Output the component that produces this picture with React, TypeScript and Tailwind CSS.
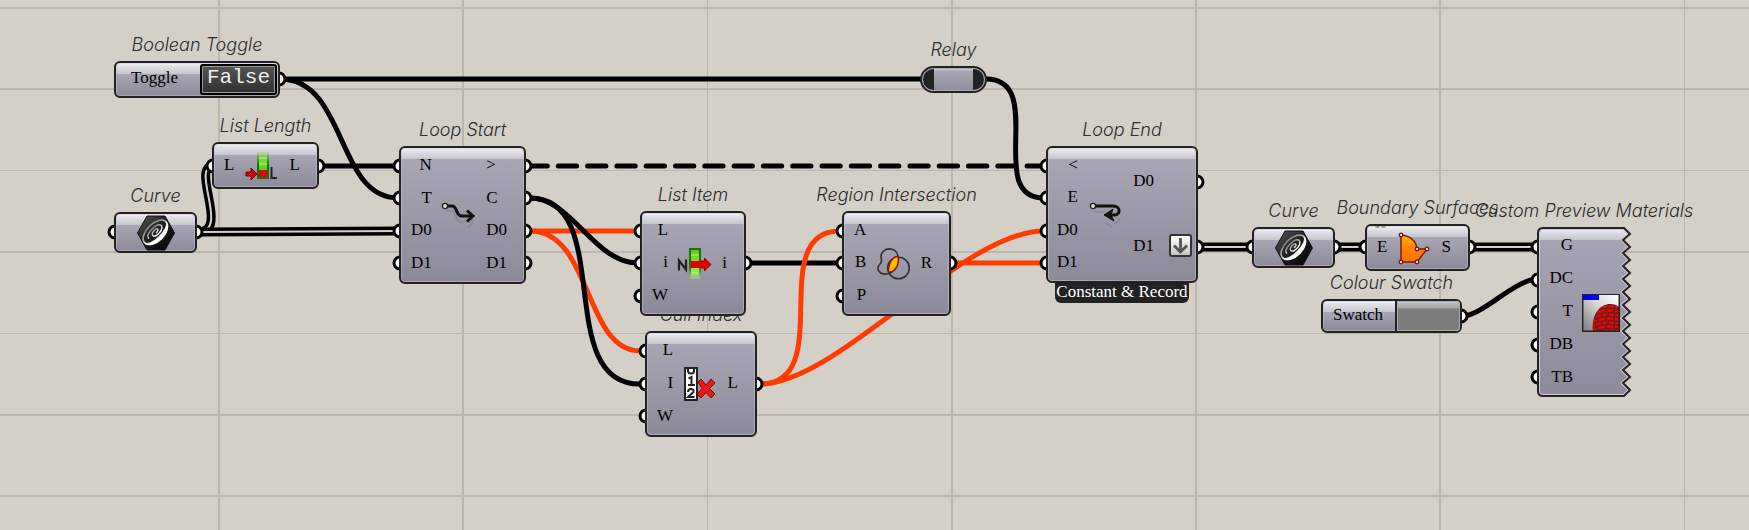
import type { ReactNode } from "react";

type WireKind = "solid" | "hot" | "double" | "dash";

const wires: { d: string; kind: WireKind }[] = [
  { d: "M280 79H924", kind: "solid" },
  { d: "M280 79C347 79 336 198 398 198", kind: "solid" },
  { d: "M198 232C231 232 189 166 214 166", kind: "double" },
  { d: "M198 232L398 231", kind: "double" },
  { d: "M320 166H398", kind: "solid" },
  { d: "M529 166H1044", kind: "dash" },
  { d: "M526 231H638", kind: "hot" },
  { d: "M530 231C592 231 584 351 640 351", kind: "hot" },
  { d: "M530 198C572 198 594 263 638 263", kind: "solid" },
  { d: "M530 198C616 198 552 384 640 384", kind: "solid" },
  { d: "M748 263H840", kind: "solid" },
  { d: "M760 384C838 384 764 231 840 231", kind: "hot" },
  { d: "M760 384C838 384 962 231 1044 231", kind: "hot" },
  { d: "M953 263H1044", kind: "hot" },
  { d: "M986 79C1048 79 984 198 1044 198", kind: "solid" },
  { d: "M1199 247H1250", kind: "double" },
  { d: "M1336 247H1364", kind: "double" },
  { d: "M1471 247H1537", kind: "double" },
  { d: "M1464 316C1482 315 1514 281 1536 279", kind: "solid" },
];

const ports: { x: number; ys: number[] }[] = [
  { x: 279, ys: [79] },
  { x: 213, ys: [166] },
  { x: 318, ys: [166] },
  { x: 115, ys: [232] },
  { x: 196, ys: [232] },
  { x: 400, ys: [166, 198, 231, 263] },
  { x: 525, ys: [166, 198, 231, 263] },
  { x: 641, ys: [231, 263, 296] },
  { x: 745, ys: [263] },
  { x: 646, ys: [351, 384, 416] },
  { x: 756, ys: [384] },
  { x: 843, ys: [231, 263, 296] },
  { x: 950, ys: [263] },
  { x: 1047, ys: [166, 198, 231, 263] },
  { x: 1197, ys: [182, 247] },
  { x: 1253, ys: [247] },
  { x: 1334, ys: [247] },
  { x: 1366, ys: [247] },
  { x: 1469, ys: [247] },
  { x: 1461, ys: [316] },
  { x: 1538, ys: [247, 280, 312, 345, 377] },
];

const gridColumns = [
  { at: 218, size: 2 }, { at: 462, size: 2 }, { at: 707, size: 1 }, { at: 951, size: 2 },
  { at: 1195, size: 2 }, { at: 1439, size: 2 }, { at: 1684, size: 1 },
];
const gridRows = [
  { at: 7, size: 2 }, { at: 88, size: 2 }, { at: 170, size: 1 }, { at: 251, size: 2 },
  { at: 333, size: 1 }, { at: 414, size: 2 }, { at: 495, size: 2 },
];

function Wire({ d, kind }: { d: string; kind: WireKind }) {
  if (kind === "double")
    return (
      <>
        <path d={d} stroke="#000" strokeWidth="9" />
        <path d={d} stroke="#d4d0c8" strokeWidth="2" />
      </>
    );
  if (kind === "dash")
    return <path d={d} stroke="#000" strokeWidth="5" strokeDasharray="18.3 11" strokeLinecap="round" />;
  return <path d={d} stroke={kind === "hot" ? "#ff3c00" : "#000"} strokeWidth="5" />;
}

function Wiring() {
  return (
    <svg className="absolute inset-0 h-full w-full" fill="none" aria-hidden="true">
      {gridColumns.map((g) => <rect key={g.at} x={g.at} y="0" width={g.size} height="100%" fill="#bab7af" />)}
      {gridRows.map((g) => <rect key={g.at} x="0" y={g.at} width="100%" height={g.size} fill="#bab7af" />)}
      {wires.map((w) => <Wire key={w.d} {...w} />)}
      {ports.map((p) => p.ys.map((y) => (
        <circle key={`${p.x}-${y}`} cx={p.x} cy={y} r="6" fill="#fff" stroke="#000" strokeWidth="3" />
      )))}
    </svg>
  );
}

function CurveIcon() {
  return (
    <svg width="40" height="36" viewBox="0 0 40 36" aria-hidden="true">
      <defs>
        <linearGradient id="hex" x1="0" y1="0" x2="1" y2="1">
          <stop offset="0" stopColor="#5a5a5a" /><stop offset=".45" stopColor="#222" /><stop offset="1" stopColor="#000" />
        </linearGradient>
        <linearGradient id="ring" x1="0" y1="0" x2="0" y2="1">
          <stop offset="0" stopColor="#8a8a8a" /><stop offset=".6" stopColor="#ccc" /><stop offset="1" stopColor="#fff" />
        </linearGradient>
      </defs>
      <path d="M11 1H29L38.500 18L29 35H11L1.500 18Z" fill="url(#hex)" stroke="#111" strokeLinejoin="round" />
      <g fill="none" stroke="url(#ring)" transform="rotate(-45 20 18)">
        <ellipse cx="20" cy="17" rx="15" ry="8.500" strokeWidth="1.600" />
        <path d="M5 17a15 9.500 0 0 0 30 0a15 5.500 0 0 1-30 0Z" fill="#fff" stroke="#fff" strokeWidth=".6" />
        <path d="M11 17c0-6 17-6 18-1c0 5-13 6-13 1.500c0-3 8-3.500 8-1c0 1.500-2 1.500-4 1.500" strokeWidth="1.500" />
      </g>
    </svg>
  );
}

function LengthIcon() {
  return (
    <svg width="34" height="30" viewBox="0 0 34 30" aria-hidden="true">
      <defs>
        <linearGradient id="lg" x1="0" y1="0" x2="0" y2="1"><stop offset="0" stopColor="#7ad83a" stopOpacity=".2" /><stop offset=".4" stopColor="#6fe01c" /><stop offset="1" stopColor="#45b400" /></linearGradient>
        <linearGradient id="lf" x1="0" y1="0" x2="0" y2="1"><stop offset="0" stopColor="#157015" stopOpacity="0" /><stop offset=".5" stopColor="#157015" /></linearGradient>
      </defs>
      <rect x="12" y="1" width="12" height="27" fill="url(#lg)" />
      <path d="M12 1H14V26H22V1H24V28H12Z" fill="url(#lf)" />
      <path d="M14 7H22M14 13H22" stroke="#b5f47c" />
      <rect x="14" y="19" width="8" height="7" fill="#e00000" />
      <path d="M1 21H6V17L12 23L6 29V25H1Z" fill="#d80000" stroke="#7e0000" />
      <path d="M26.500 16V27H32" fill="none" stroke="#222" strokeWidth="2" />
    </svg>
  );
}

function ItemIcon() {
  return (
    <svg width="36" height="32" viewBox="0 0 36 32" aria-hidden="true">
      <defs>
        <linearGradient id="ig" x1="0" y1="0" x2="0" y2="1"><stop offset="0" stopColor="#5fc80c" /><stop offset=".7" stopColor="#8dec40" /><stop offset="1" stopColor="#b4ff70" stopOpacity=".3" /></linearGradient>
        <linearGradient id="if" x1="0" y1="0" x2="0" y2="1"><stop offset=".6" stopColor="#187018" /><stop offset="1" stopColor="#187018" stopOpacity="0" /></linearGradient>
      </defs>
      <path d="M2 22.500V12.500L9 21.500V11.500" fill="none" stroke="#222" strokeWidth="2.200" />
      <rect x="12" y="0" width="12" height="31" fill="url(#ig)" />
      <path d="M12 31V0H24V31H22V2H14V31Z" fill="url(#if)" />
      <path d="M14 7H22M14 25H22" stroke="#b5f47c" />
      <path d="M14 13H27V10L34 16.500L27 23V20H14Z" fill="#e00000" />
      <path d="M24 13H27.500V10L34 16.500L27.500 23V20H24" fill="none" stroke="#8a0000" />
    </svg>
  );
}

function CullIcon() {
  return (
    <svg width="32" height="34" viewBox="0 0 32 34" aria-hidden="true">
      <rect x="1" y="1" width="12" height="32" fill="#fff" stroke="#222" strokeWidth="2" />
      <path d="M4 1V4Q4 6.500 7 6.500T10 4V1M4.500 11.500L7.500 10V18M4 18H11M4 25Q4 22 7 22T9.500 25L4 30H10.500" fill="none" stroke="#222" strokeWidth="2" />
      <path d="M14 15L17 12L22 18L27 12L31 16L25.500 21.500L31 27L27 31L22 25.500L17 31L13 27L18 21.500Z" fill="#e51a12" stroke="#950000" strokeLinejoin="round" />
    </svg>
  );
}

function RegionIcon() {
  return (
    <svg width="34" height="34" viewBox="0 0 34 34" aria-hidden="true">
      <defs>
        <linearGradient id="rg" x1="0" y1="0" x2="1" y2="1"><stop offset="0" stopColor="#ff8a00" /><stop offset=".5" stopColor="#ffc400" /><stop offset="1" stopColor="#ff7800" /></linearGradient>
      </defs>
      <g fill="none" stroke="#303034" strokeWidth="1.600">
        <path d="M22 9C20-1 6 0 5 9C5 13 7 14 4 17C-1 22 4 28 11 27C18 26 23 17 22 9Z" />
        <circle cx="22.500" cy="21" r="10.800" />
      </g>
      <path d="M22 9.500C17 9 12 16 12.500 25C19 26 24 17 22 9.500Z" fill="url(#rg)" stroke="#8a1808" strokeWidth="1.500" />
    </svg>
  );
}

function StartIcon() {
  return (
    <svg width="36" height="28" viewBox="0 0 36 28" fill="none" aria-hidden="true">
      <path d="M5 10H11C16 10 13 21 20 21H29M31 18C33 21 30 25 27 26" stroke="#84828f" strokeWidth="2" opacity=".6" />
      <path d="M6 5H11C17 5 14 15 21 15H31" stroke="#111" strokeWidth="3" />
      <path d="M26 9.500L32 15L26 20.500" stroke="#111" strokeWidth="3" />
      <circle cx="4" cy="5" r="2.600" fill="#ddd" stroke="#222" strokeWidth="1.400" />
    </svg>
  );
}

function EndIcon() {
  return (
    <svg width="34" height="28" viewBox="0 0 34 28" fill="none" aria-hidden="true">
      <path d="M5 11H16M17 22L23 26M31 17C30 20 27 22 25 22" stroke="#84828f" strokeWidth="2" opacity=".6" />
      <path d="M6 5H24C32 5 32 14 25 14H20" stroke="#111" strokeWidth="3" />
      <path d="M15 14L24 8L22 14L25 20Z" fill="#111" stroke="#111" strokeLinejoin="round" />
      <circle cx="4" cy="5" r="2.600" fill="#ddd" stroke="#222" strokeWidth="1.400" />
    </svg>
  );
}

function SurfaceIcon() {
  const corners = [[4, 4], [4, 31], [20, 31], [30, 18], [20, 18]];
  return (
    <svg width="34" height="34" viewBox="0 0 34 34" aria-hidden="true">
      <defs>
        <linearGradient id="sg" x1="0" y1="0" x2="0" y2="1"><stop offset="0" stopColor="#ffb300" /><stop offset=".6" stopColor="#ff7a00" /><stop offset="1" stopColor="#ff7200" /></linearGradient>
      </defs>
      <path d="M4 4C14 5 19 10 20 18H30L20 31H4Z" fill="url(#sg)" stroke="#7a2010" strokeWidth="1.500" />
      {corners.map(([x, y]) => <circle key={`${x}-${y}`} cx={x} cy={y} r="1.800" fill="#f3cdb8" stroke="#6b1414" strokeWidth="1.200" />)}
    </svg>
  );
}

function MaterialIcon() {
  const bands = [13, 17, 21, 25, 29, 33, 37, 41];
  return (
    <svg width="38" height="38" viewBox="0 0 38 38" aria-hidden="true">
      <defs>
        <linearGradient id="mg" x1="0" y1="1" x2="1" y2="0"><stop offset="0" stopColor="#777" /><stop offset=".6" stopColor="#ddd" /><stop offset="1" stopColor="#fff" /></linearGradient>
        <clipPath id="mc"><path d="M11 37C9 21 18 10 28 10C32 10 35 11 37 13V37Z" /></clipPath>
      </defs>
      <rect width="38" height="38" fill="url(#mg)" />
      <g clipPath="url(#mc)">
        <rect width="38" height="38" fill="#701c1c" />
        {bands.map((y, i) => (
          <path key={y} d={`M8 ${y + 4}Q28 ${y - 5} 48 ${y + 4}`} stroke="#e00808" strokeWidth="2.400" fill="none" strokeDasharray={i % 2 ? "7 1.500" : "5 1.500"} />
        ))}
      </g>
      <path d="M.7 0V37.300H37.300V0" fill="none" stroke="#222" strokeWidth="1.500" />
      <path d="M0 .5H38" stroke="#222" />
      <rect x="1" y="1" width="16" height="5" fill="#0000f5" />
    </svg>
  );
}

function Title({ children }: { children: ReactNode }) {
  return (
    <h2 className="mb-1.5 whitespace-nowrap font-['Inter',sans-serif] text-[18px] font-light italic leading-5 text-[#2c2c2c]">
      {children}
    </h2>
  );
}

const group = "absolute flex flex-col items-center";
const shell =
  "relative z-10 flex w-full rounded-[6px] border-2 border-[#222] bg-[linear-gradient(to_bottom,#ffffff_0,#e6e5ea_2px,#c6c5cf_11px,#a8a6b5_11px,#8c8a99_100%)] shadow-[inset_0_0_0_1px_#c4c2ce80]";

type ComponentProps = {
  title: string;
  place: string;
  size: string;
  icon: ReactNode;
  inputs?: string[];
  outputs?: { name: string; action?: ReactNode }[];
  inset?: string;
  badge?: string;
  mark?: boolean;
};

function Component({ title, place, size, icon, inputs, outputs, inset = "pl-[10px] pr-[17px]", badge, mark }: ComponentProps) {
  return (
    <section className={`${group} ${place}`}>
      <Title>{title}</Title>
      <div className={`${shell} ${size} ${inputs ? `justify-between ${inset}` : "justify-center"}`}>
        {inputs && (
          <ul className="flex flex-col pb-[3px] pt-px text-right">
            {inputs.map((name) => <li key={name} className="flex flex-1 items-center justify-end">{name}</li>)}
          </ul>
        )}
        <div className="flex items-center">{icon}</div>
        {outputs && (
          <ul className="flex flex-col pb-[3px] pt-px">
            {outputs.map((o) => (
              <li key={o.name} className="flex flex-1 items-center gap-[15px]">{o.name}{o.action}</li>
            ))}
          </ul>
        )}
        {mark && (
          <div className="absolute left-2 top-0 flex gap-px">
            <i className="h-[2px] w-[5px] rounded-b-sm bg-[#999]" />
            <i className="h-[2px] w-[5px] rounded-b-sm bg-[#999]" />
          </div>
        )}
      </div>
      {badge && (
        <p className="-mt-1 whitespace-nowrap rounded-b-[6px] bg-[#222] px-px pb-px pt-[3px] text-white">{badge}</p>
      )}
    </section>
  );
}

function RecordButton() {
  return (
    <button type="button" aria-label="Record" className="flex h-[23px] w-[23px] items-center justify-center rounded-[3px] border-2 border-[#333] bg-[linear-gradient(to_bottom,#fff,#c4c4c4)]">
      <svg width="17" height="17" viewBox="0 0 17 17" fill="none" stroke="#555" strokeWidth="2.800" aria-hidden="true">
        <path d="M8.500 1V14M2 8.500L8.500 15L15 8.500" />
      </svg>
    </button>
  );
}

function BooleanToggle() {
  return (
    <section className={`${group} left-[114px] top-[35px] w-[166px]`}>
      <Title>Boolean Toggle</Title>
      <div className={`${shell} h-[37px] items-center justify-between pl-[15px] pr-px`}>
        <span id="toggle-name" className="pb-[3px]">Toggle</span>
        <button
          type="button"
          aria-describedby="toggle-name"
          className="flex h-[31px] w-[77px] items-center justify-center rounded-[3px] border-2 border-black bg-[linear-gradient(to_bottom,#555,#303030)] pb-[3px] font-['Liberation_Mono',monospace] text-[21px] leading-6 text-[#eee] shadow-[inset_0_0_0_1px_#999]"
        >
          False
        </button>
      </div>
    </section>
  );
}

function Relay() {
  return (
    <section className={`${group} left-[920px] top-[40px] w-[67px]`}>
      <Title>Relay</Title>
      <div className="flex h-[27px] w-full rounded-full border-2 border-[#222] bg-[#aaa] p-px">
        <div className="flex flex-1 justify-center overflow-hidden rounded-full bg-[#222]">
          <div className="w-[39px] bg-[linear-gradient(to_bottom,#d0cfd8,#a8a6b5_2px,#908e9c)]" />
        </div>
      </div>
    </section>
  );
}

function ColourSwatch() {
  return (
    <section className={`${group} left-[1321px] top-[273px] w-[141px]`}>
      <Title>Colour Swatch</Title>
      <div className={`${shell} h-[34px] items-center justify-between pl-[10px]`}>
        <span className="pb-[3px]">Swatch</span>
        <button
          type="button"
          aria-label="Swatch colour"
          className="w-[65px] self-stretch rounded-r-[4px] border-l-2 border-[#222] bg-[linear-gradient(to_bottom,#eee_0,#bbb_2px,#a4a4a4_7px,#7c7c7c_8px,#7c7c7c_100%)] shadow-[inset_0_0_0_1px_#aaa]"
        />
      </div>
    </section>
  );
}

const teeth = Array.from({ length: 13 }, (_, i) => `L93 ${7 + i * 13}${i < 12 ? `L86 ${13 + i * 13}` : ""}`).join("");
const jagged = `M6 1H87${teeth}L87 169H6Q1 169 1 164V6Q1 1 6 1Z`;

function CustomPreview() {
  return (
    <section className={`${group} left-[1537px] top-[201px] w-[94px]`}>
      <Title>Custom Preview Materials</Title>
      <div className="relative flex h-[171px] w-full gap-[9px] pl-[12px]">
        <svg className="absolute inset-0" width="95" height="171" aria-hidden="true">
          <defs>
            <linearGradient id="body" x1="0" y1="0" x2="0" y2="1"><stop offset="0" stopColor="#a8a6b5" /><stop offset="1" stopColor="#8c8a99" /></linearGradient>
            <linearGradient id="shine" x1="0" y1="0" x2="0" y2="1"><stop offset="0" stopColor="#f2f2f6" /><stop offset="1" stopColor="#c4c3ce" /></linearGradient>
            <clipPath id="jag"><path d={jagged} /></clipPath>
          </defs>
          <g clipPath="url(#jag)">
            <path d={jagged} fill="url(#body)" />
            <rect width="95" height="13" fill="url(#shine)" />
            <path d={jagged} fill="none" stroke="#cccad5" strokeWidth="4" />
          </g>
          <path d={jagged} fill="none" stroke="#222" strokeWidth="2" />
        </svg>
        <ul className="relative flex w-6 flex-col pb-[5px] pt-[2px]">
          {["G", "DC", "T", "DB", "TB"].map((name) => (
            <li key={name} className="flex flex-1 items-center justify-end">{name}</li>
          ))}
        </ul>
        <div className="relative flex items-center"><MaterialIcon /></div>
      </div>
    </section>
  );
}

export default function App() {
  return (
    <main className="relative min-h-screen w-full overflow-hidden bg-[#d4d0c8] font-['Liberation_Serif',serif] text-[17px] leading-5 text-black">
      <Wiring />
      <BooleanToggle />
      <Relay />
      <Component
        title="List Length" place="left-[212px] top-[116px] w-[107px]" size="h-[47px]"
        inputs={["L"]} outputs={[{ name: "L" }]} icon={<LengthIcon />}
      />
      <Component title="Curve" place="left-[114px] top-[186px] w-[83px]" size="h-[41px]" icon={<CurveIcon />} />
      <Component
        title="Loop Start" place="left-[399px] top-[120px] w-[127px]" size="h-[138px]"
        inputs={["N", "T", "D0", "D1"]}
        outputs={[{ name: ">" }, { name: "C" }, { name: "D0" }, { name: "D1" }]}
        icon={<StartIcon />}
      />
      <Component
        title="Cull Index" place="left-[645px] top-[305px] w-[112px]" size="h-[106px]"
        inputs={["L", "I", "W"]} outputs={[{ name: "L" }]} icon={<CullIcon />}
      />
      <Component
        title="List Item" place="left-[640px] top-[185px] w-[106px]" size="h-[105px]"
        inputs={["L", "i", "W"]} outputs={[{ name: "i" }]} icon={<ItemIcon />}
      />
      <Component
        title="Region Intersection" place="left-[842px] top-[185px] w-[109px]" size="h-[105px]"
        inputs={["A", "B", "P"]} outputs={[{ name: "R" }]} icon={<RegionIcon />}
      />
      <Component
        title="Loop End" place="left-[1046px] top-[120px] w-[152px]" size="h-[137px]"
        inputs={["<", "E", "D0", "D1"]}
        outputs={[{ name: "D0" }, { name: "D1", action: <RecordButton /> }]}
        icon={<EndIcon />} inset="pl-[9px] pr-1" badge="Constant & Record"
      />
      <Component title="Curve" place="left-[1252px] top-[201px] w-[83px]" size="h-[41px]" icon={<CurveIcon />} />
      <Component
        title="Boundary Surfaces" place="left-[1365px] top-[198px] w-[105px]" size="h-[47px]"
        inputs={["E"]} outputs={[{ name: "S" }]} icon={<SurfaceIcon />} mark
      />
      <ColourSwatch />
      <CustomPreview />
    </main>
  );
}
